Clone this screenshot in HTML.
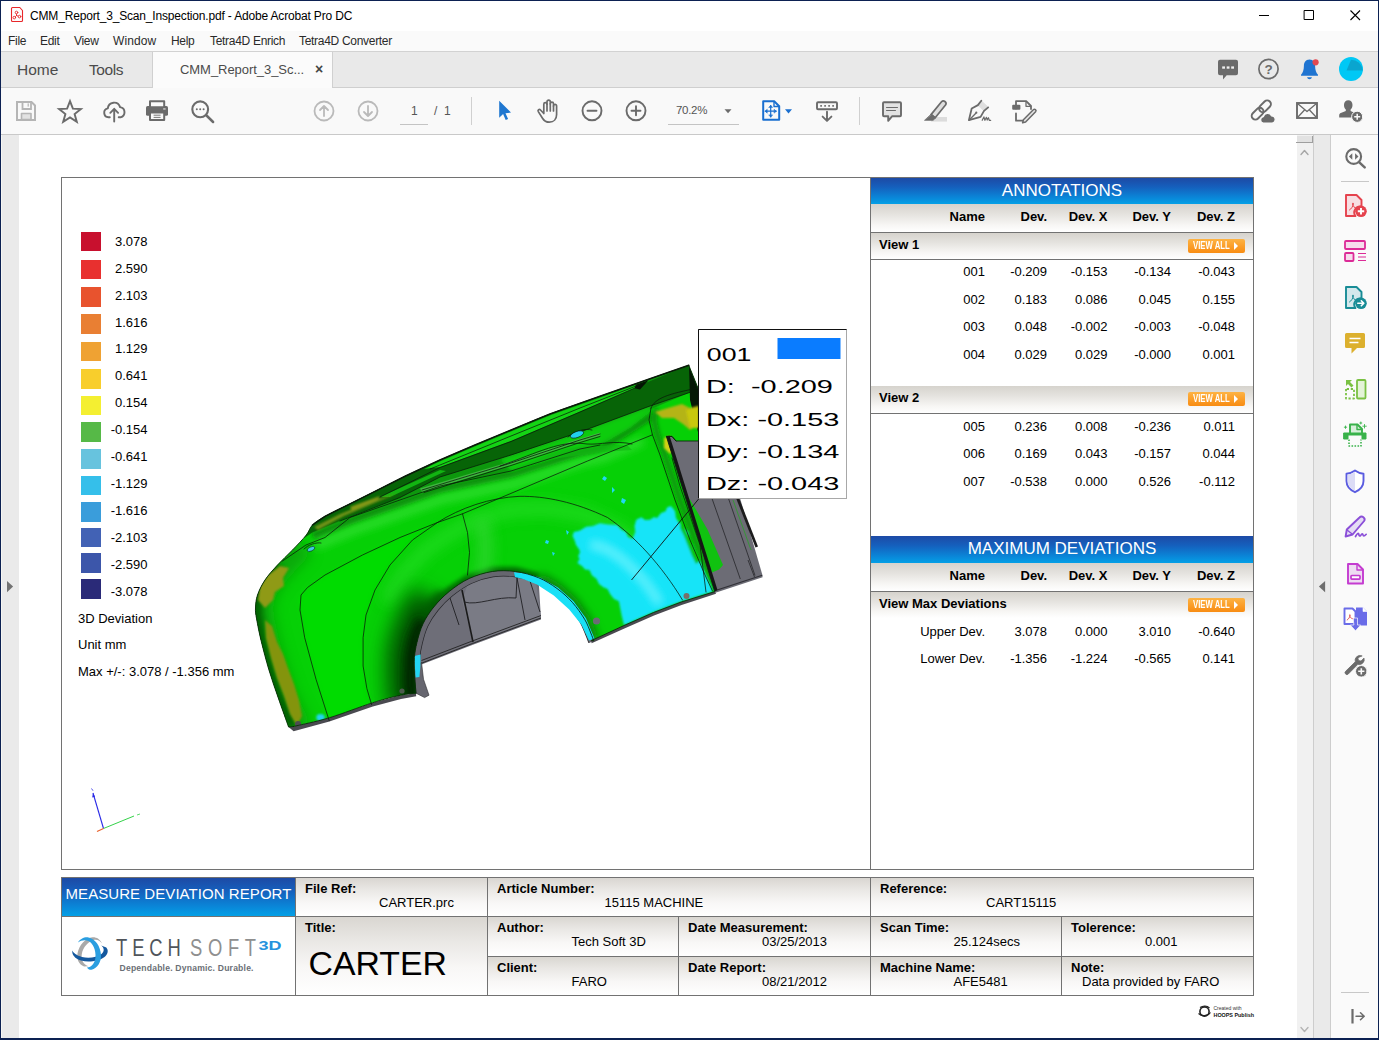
<!DOCTYPE html>
<html lang="en">
<head>
<meta charset="utf-8">
<title>CMM_Report_3_Scan_Inspection.pdf - Adobe Acrobat Pro DC</title>
<style>
*{box-sizing:border-box;margin:0;padding:0}
html,body{width:1379px;height:1040px;overflow:hidden;background:#fff}
body{font-family:"Liberation Sans",sans-serif;color:#000;position:relative}
.abs{position:absolute}
#win{position:absolute;left:0;top:0;width:1379px;height:1040px;background:#fff;overflow:hidden}
/* chrome */
#titlebar{left:1px;top:1px;width:1377px;height:30px;background:#fff}
#titletext{left:30px;top:9px;font-size:12px;color:#000;white-space:nowrap;letter-spacing:-0.17px}
#menubar{left:1px;top:31px;width:1377px;height:20px;background:#fafafa}
.menu{position:absolute;top:34px;font-size:12px;color:#2a2a2a;white-space:nowrap;letter-spacing:-0.3px}
#tabbar{left:1px;top:51px;width:1377px;height:37px;background:#e9e9e9;border-top:1px solid #d2d2d2;border-bottom:1px solid #cfcfcf}
#tabactive{left:152px;top:52px;width:181px;height:36px;background:#fbfbfb;border-left:1px solid #d0d0d0;border-right:1px solid #d0d0d0}
.tabtxt{position:absolute;white-space:nowrap;color:#4b4b4b}
#toolbar{left:1px;top:88px;width:1377px;height:47px;background:#f9f9f9;border-bottom:1px solid #c9c9c9}
/* content */
#leftpane{left:1px;top:135px;width:18px;height:903px;background:#eaeaea;border-left:1px solid #f6f6f3}
#page{left:19px;top:135px;width:1278px;height:903px;background:#fff}
#vscroll{left:1297px;top:135px;width:16px;height:903px;background:#f1f1f1}
#midpane{left:1313px;top:135px;width:18px;height:903px;background:#eaeaea;border-left:1px solid #cdcdcd;border-right:1px solid #cdcdcd}
#rightpane{left:1331px;top:135px;width:47px;height:903px;background:#fafafa}
.bord{background:#0c2152}
/* pdf page */
.t13{position:absolute;font-size:13px;line-height:15px;white-space:nowrap;color:#000}
.b{font-weight:bold}
.r{text-align:right}
.bluehdr{position:absolute;background:linear-gradient(#1d4aa5 0%,#1560bd 35%,#0a86d8 75%,#04a0e6 100%);color:#fff;text-align:center;white-space:nowrap}
.greyrow{position:absolute;background:linear-gradient(#d6d3cd 0%,#e4e2de 35%,#f7f6f4 75%,#ffffff 100%)}
.line{position:absolute;background:#727272}
.va{position:absolute;width:57px;height:14.4px;border-radius:2px;background:linear-gradient(#fdb344,#fb9f2a 50%,#f88c12);color:#fff;font-size:10px;font-weight:bold;line-height:14.4px;white-space:nowrap;overflow:hidden}
.va span{position:absolute;left:5px;top:0.2px;transform:scaleX(0.775);transform-origin:0 50%;letter-spacing:0}
.va i{position:absolute;left:46.3px;top:3.2px;width:0;height:0;border-left:4.6px solid #fff;border-top:4px solid transparent;border-bottom:4px solid transparent}
.sw{position:absolute;left:81px;width:20px;height:19px}
.cell{position:absolute;background:linear-gradient(#d9d6d1 0%,#e9e7e4 30%,#f8f7f6 65%,#ffffff 100%)}
</style>
</head>
<body>
<div id="win">
<!-- CHROME-START -->
<div id="titlebar" class="abs"></div>
<div id="titletext" class="abs">CMM_Report_3_Scan_Inspection.pdf - Adobe Acrobat Pro DC</div>
<div id="menubar" class="abs"></div>
<div class="menu" style="left:8px">File</div>
<div class="menu" style="left:40px">Edit</div>
<div class="menu" style="left:74px">View</div>
<div class="menu" style="left:113px;letter-spacing:0.1px">Window</div>
<div class="menu" style="left:171px">Help</div>
<div class="menu" style="left:210px">Tetra4D Enrich</div>
<div class="menu" style="left:299px">Tetra4D Converter</div>
<div id="tabbar" class="abs"></div>
<div id="tabactive" class="abs"></div>
<div class="tabtxt" style="left:17px;top:61px;font-size:15.5px">Home</div>
<div class="tabtxt" style="left:89px;top:61px;font-size:15.5px;letter-spacing:-0.4px">Tools</div>
<div class="tabtxt" style="left:180px;top:62px;font-size:13px;letter-spacing:-0.05px">CMM_Report_3_Sc...</div>
<div class="tabtxt" style="left:315px;top:61px;font-size:14px;font-weight:bold;color:#444">×</div>
<div id="toolbar" class="abs"></div>
<!-- CHROME-END -->
<!-- CONTENT-START -->
<div id="leftpane" class="abs"></div>
<div id="page" class="abs"></div>
<div id="vscroll" class="abs"></div>
<div id="midpane" class="abs"></div>
<div id="rightpane" class="abs"></div>
<!-- CONTENT-END -->
<!-- PDF-START -->
<div class="line" style="left:61px;top:177px;width:1193px;height:1px;background:#727272"></div>
<div class="line" style="left:61px;top:869px;width:1193px;height:1px;background:#727272"></div>
<div class="line" style="left:61px;top:177px;width:1px;height:693px;background:#727272"></div>
<div class="line" style="left:1253px;top:177px;width:1px;height:693px;background:#727272"></div>
<div class="line" style="left:870px;top:177px;width:1px;height:693px;background:#727272"></div>
<div class="sw" style="top:232px;height:19px;background:#c8102e"></div>
<div class="t13 r" style="left:100px;width:47.5px;top:233.8px">3.078</div>
<div class="sw" style="top:260px;height:19px;background:#e8302f"></div>
<div class="t13 r" style="left:100px;width:47.5px;top:260.7px">2.590</div>
<div class="sw" style="top:287px;height:20px;background:#e8532e"></div>
<div class="t13 r" style="left:100px;width:47.5px;top:287.6px">2.103</div>
<div class="sw" style="top:314px;height:20px;background:#e97f33"></div>
<div class="t13 r" style="left:100px;width:47.5px;top:314.5px">1.616</div>
<div class="sw" style="top:342px;height:19px;background:#efa233"></div>
<div class="t13 r" style="left:100px;width:47.5px;top:341.4px">1.129</div>
<div class="sw" style="top:369px;height:20px;background:#f8ce2c"></div>
<div class="t13 r" style="left:100px;width:47.5px;top:368.3px">0.641</div>
<div class="sw" style="top:396px;height:19px;background:#f4ef31"></div>
<div class="t13 r" style="left:100px;width:47.5px;top:395.2px">0.154</div>
<div class="sw" style="top:422px;height:20px;background:#56b947"></div>
<div class="t13 r" style="left:100px;width:47.5px;top:422.1px">-0.154</div>
<div class="sw" style="top:449px;height:20px;background:#67c3de"></div>
<div class="t13 r" style="left:100px;width:47.5px;top:449.0px">-0.641</div>
<div class="sw" style="top:476px;height:19px;background:#35bfea"></div>
<div class="t13 r" style="left:100px;width:47.5px;top:475.9px">-1.129</div>
<div class="sw" style="top:502px;height:20px;background:#3a9ddb"></div>
<div class="t13 r" style="left:100px;width:47.5px;top:502.8px">-1.616</div>
<div class="sw" style="top:528px;height:19px;background:#4262b5"></div>
<div class="t13 r" style="left:100px;width:47.5px;top:529.7px">-2.103</div>
<div class="sw" style="top:553px;height:20px;background:#3c56aa"></div>
<div class="t13 r" style="left:100px;width:47.5px;top:556.6px">-2.590</div>
<div class="sw" style="top:579px;height:20px;background:#2a2a78"></div>
<div class="t13 r" style="left:100px;width:47.5px;top:583.5px">-3.078</div>
<div class="t13" style="left:78px;top:611px">3D Deviation</div>
<div class="t13" style="left:78px;top:637px">Unit mm</div>
<div class="t13" style="left:78px;top:664px">Max +/-: 3.078 / -1.356 mm</div>
<div class="bluehdr" style="left:871px;top:178px;width:382px;height:26px;font-size:17px;line-height:25px">ANNOTATIONS</div>
<div class="greyrow" style="left:871px;top:204px;width:382px;height:28px"></div>
<div class="line" style="left:871px;top:232px;width:382px;height:1px;background:#727272"></div>
<div class="t13 b r" style="left:905px;width:80px;top:209px">Name</div>
<div class="t13 b r" style="left:967px;width:80px;top:209px">Dev.</div>
<div class="t13 b r" style="left:1027.5px;width:80px;top:209px">Dev. X</div>
<div class="t13 b r" style="left:1091px;width:80px;top:209px">Dev. Y</div>
<div class="t13 b r" style="left:1155px;width:80px;top:209px">Dev. Z</div>
<div class="greyrow" style="left:871px;top:233px;width:382px;height:26px"></div>
<div class="line" style="left:871px;top:259px;width:382px;height:1px;background:#727272"></div>
<div class="t13 b" style="left:879px;top:237px">View 1</div>
<div class="va" style="left:1188px;top:238.5px"><span>VIEW ALL</span><i></i></div>
<div class="t13 r" style="left:895px;width:90px;top:264px">001</div>
<div class="t13 r" style="left:957px;width:90px;top:264px">-0.209</div>
<div class="t13 r" style="left:1017.5px;width:90px;top:264px">-0.153</div>
<div class="t13 r" style="left:1081px;width:90px;top:264px">-0.134</div>
<div class="t13 r" style="left:1145px;width:90px;top:264px">-0.043</div>
<div class="t13 r" style="left:895px;width:90px;top:291.5px">002</div>
<div class="t13 r" style="left:957px;width:90px;top:291.5px">0.183</div>
<div class="t13 r" style="left:1017.5px;width:90px;top:291.5px">0.086</div>
<div class="t13 r" style="left:1081px;width:90px;top:291.5px">0.045</div>
<div class="t13 r" style="left:1145px;width:90px;top:291.5px">0.155</div>
<div class="t13 r" style="left:895px;width:90px;top:319px">003</div>
<div class="t13 r" style="left:957px;width:90px;top:319px">0.048</div>
<div class="t13 r" style="left:1017.5px;width:90px;top:319px">-0.002</div>
<div class="t13 r" style="left:1081px;width:90px;top:319px">-0.003</div>
<div class="t13 r" style="left:1145px;width:90px;top:319px">-0.048</div>
<div class="t13 r" style="left:895px;width:90px;top:346.7px">004</div>
<div class="t13 r" style="left:957px;width:90px;top:346.7px">0.029</div>
<div class="t13 r" style="left:1017.5px;width:90px;top:346.7px">0.029</div>
<div class="t13 r" style="left:1081px;width:90px;top:346.7px">-0.000</div>
<div class="t13 r" style="left:1145px;width:90px;top:346.7px">0.001</div>
<div class="greyrow" style="left:871px;top:386px;width:382px;height:27px"></div>
<div class="line" style="left:871px;top:413px;width:382px;height:1px;background:#727272"></div>
<div class="t13 b" style="left:879px;top:390px">View 2</div>
<div class="va" style="left:1188px;top:391.5px"><span>VIEW ALL</span><i></i></div>
<div class="t13 r" style="left:895px;width:90px;top:419px">005</div>
<div class="t13 r" style="left:957px;width:90px;top:419px">0.236</div>
<div class="t13 r" style="left:1017.5px;width:90px;top:419px">0.008</div>
<div class="t13 r" style="left:1081px;width:90px;top:419px">-0.236</div>
<div class="t13 r" style="left:1145px;width:90px;top:419px">0.011</div>
<div class="t13 r" style="left:895px;width:90px;top:446px">006</div>
<div class="t13 r" style="left:957px;width:90px;top:446px">0.169</div>
<div class="t13 r" style="left:1017.5px;width:90px;top:446px">0.043</div>
<div class="t13 r" style="left:1081px;width:90px;top:446px">-0.157</div>
<div class="t13 r" style="left:1145px;width:90px;top:446px">0.044</div>
<div class="t13 r" style="left:895px;width:90px;top:474px">007</div>
<div class="t13 r" style="left:957px;width:90px;top:474px">-0.538</div>
<div class="t13 r" style="left:1017.5px;width:90px;top:474px">0.000</div>
<div class="t13 r" style="left:1081px;width:90px;top:474px">0.526</div>
<div class="t13 r" style="left:1145px;width:90px;top:474px">-0.112</div>
<div class="bluehdr" style="left:871px;top:536px;width:382px;height:27px;font-size:17px;line-height:26px">MAXIMUM DEVIATIONS</div>
<div class="greyrow" style="left:871px;top:563px;width:382px;height:28px"></div>
<div class="line" style="left:871px;top:591px;width:382px;height:1px;background:#727272"></div>
<div class="t13 b r" style="left:905px;width:80px;top:568px">Name</div>
<div class="t13 b r" style="left:967px;width:80px;top:568px">Dev.</div>
<div class="t13 b r" style="left:1027.5px;width:80px;top:568px">Dev. X</div>
<div class="t13 b r" style="left:1091px;width:80px;top:568px">Dev. Y</div>
<div class="t13 b r" style="left:1155px;width:80px;top:568px">Dev. Z</div>
<div class="greyrow" style="left:871px;top:592px;width:382px;height:26px"></div>
<div class="t13 b" style="left:879px;top:596px">View Max Deviations</div>
<div class="va" style="left:1188px;top:597.5px"><span>VIEW ALL</span><i></i></div>
<div class="t13 r" style="left:895px;width:90px;top:624px">Upper Dev.</div>
<div class="t13 r" style="left:957px;width:90px;top:624px">3.078</div>
<div class="t13 r" style="left:1017.5px;width:90px;top:624px">0.000</div>
<div class="t13 r" style="left:1081px;width:90px;top:624px">3.010</div>
<div class="t13 r" style="left:1145px;width:90px;top:624px">-0.640</div>
<div class="t13 r" style="left:895px;width:90px;top:651px">Lower Dev.</div>
<div class="t13 r" style="left:957px;width:90px;top:651px">-1.356</div>
<div class="t13 r" style="left:1017.5px;width:90px;top:651px">-1.224</div>
<div class="t13 r" style="left:1081px;width:90px;top:651px">-0.565</div>
<div class="t13 r" style="left:1145px;width:90px;top:651px">0.141</div>
<div class="bluehdr" style="left:62px;top:878px;width:233px;height:38px;font-size:15px;line-height:32px;letter-spacing:0.06px">MEASURE DEVIATION REPORT</div>
<div class="cell" style="left:296px;top:878px;width:191px;height:38px"></div>
<div class="t13 b" style="left:305px;top:881px">File Ref:</div>
<div class="t13" style="left:379px;top:895px">CARTER.prc</div>
<div class="cell" style="left:488px;top:878px;width:382px;height:38px"></div>
<div class="t13 b" style="left:497px;top:881px">Article Number:</div>
<div class="t13" style="left:604.5px;top:895px">15115 MACHINE</div>
<div class="cell" style="left:871px;top:878px;width:382px;height:38px"></div>
<div class="t13 b" style="left:880px;top:881px">Reference:</div>
<div class="t13" style="left:986px;top:895px">CART15115</div>
<div class="cell" style="left:296px;top:917px;width:191px;height:78px"></div>
<div class="t13 b" style="left:305px;top:920px">Title:</div>
<div class="abs" style="left:308.5px;top:944.8px;font-size:33.8px;line-height:36px;white-space:nowrap">CARTER</div>
<div class="cell" style="left:488px;top:917px;width:190px;height:39px"></div>
<div class="t13 b" style="left:497px;top:920px">Author:</div>
<div class="t13" style="left:571.5px;top:934px">Tech Soft 3D</div>
<div class="cell" style="left:679px;top:917px;width:191px;height:39px"></div>
<div class="t13 b" style="left:688px;top:920px">Date Measurement:</div>
<div class="t13" style="left:762px;top:934px">03/25/2013</div>
<div class="cell" style="left:871px;top:917px;width:190px;height:39px"></div>
<div class="t13 b" style="left:880px;top:920px">Scan Time:</div>
<div class="t13" style="left:953.5px;top:934px">25.124secs</div>
<div class="cell" style="left:1062px;top:917px;width:191px;height:39px"></div>
<div class="t13 b" style="left:1071px;top:920px">Tolerence:</div>
<div class="t13" style="left:1145px;top:934px">0.001</div>
<div class="cell" style="left:488px;top:957px;width:190px;height:38px"></div>
<div class="t13 b" style="left:497px;top:960px">Client:</div>
<div class="t13" style="left:571.5px;top:974px">FARO</div>
<div class="cell" style="left:679px;top:957px;width:191px;height:38px"></div>
<div class="t13 b" style="left:688px;top:960px">Date Report:</div>
<div class="t13" style="left:762px;top:974px">08/21/2012</div>
<div class="cell" style="left:871px;top:957px;width:190px;height:38px"></div>
<div class="t13 b" style="left:880px;top:960px">Machine Name:</div>
<div class="t13" style="left:953.5px;top:974px">AFE5481</div>
<div class="cell" style="left:1062px;top:957px;width:191px;height:38px"></div>
<div class="t13 b" style="left:1071px;top:960px">Note:</div>
<div class="t13" style="left:1082px;top:974px">Data provided by FARO</div>
<div class="line" style="left:61px;top:877px;width:1193px;height:1px;background:#727272"></div>
<div class="line" style="left:61px;top:995px;width:1193px;height:1px;background:#727272"></div>
<div class="line" style="left:61px;top:877px;width:1px;height:119px;background:#727272"></div>
<div class="line" style="left:1253px;top:877px;width:1px;height:119px;background:#727272"></div>
<div class="line" style="left:61px;top:916px;width:1193px;height:1px;background:#727272"></div>
<div class="line" style="left:487px;top:956px;width:767px;height:1px;background:#727272"></div>
<div class="line" style="left:295px;top:877px;width:1px;height:119px;background:#727272"></div>
<div class="line" style="left:487px;top:877px;width:1px;height:119px;background:#727272"></div>
<div class="line" style="left:870px;top:877px;width:1px;height:119px;background:#727272"></div>
<div class="line" style="left:678px;top:916px;width:1px;height:80px;background:#727272"></div>
<div class="line" style="left:1061px;top:916px;width:1px;height:80px;background:#727272"></div>
<svg class="abs" style="left:62px;top:917px" width="233" height="78" viewBox="62 917 233 78">
<g stroke="none">
<path d="M102 943.5C100 939 96.5 937 92.5 937.200C85.5 938 79 945 77.5 953.500C76.5 959.5 79 964.5 84 966.500L88.5 966.300C83.5 964.5 80.8 960 81.8 954C83 947.5 88 941.5 93.5 940C97 939.2 100 940.5 102 943.500Z" fill="#a9a9a9"/>
<path d="M72.4 950.500C71.5 954.5 75 958.8 81 960.600C89 962.8 99 961 104.5 957C108 954.3 108.8 950.5 106.3 947.500L101.2 945.500C104.5 948 104.5 951.5 101.5 954C97 957.5 88.5 958.7 82 957C76.5 955.5 73 952.5 72.4 950.500Z" fill="#14589e"/>
<path d="M78 942.600C80 939 84.5 936.8 88.5 937.500C95 938.7 100.5 946 101 955C101.3 962 97.5 968.3 91.5 969.800C89.5 970 88 969 87 967.500C91.5 967.5 95 963 95.5 957C96 950 93 943.5 88.5 941C85 939.5 81 940.3 78 942.600Z" fill="#2a9ee0"/>
</g>
<g transform="translate(116 956) scale(0.8 1)"><text x="0" y="0" font-family="Liberation Sans, sans-serif" font-size="23" fill="#50555b" textLength="81" lengthAdjust="spacing">TECH</text></g>
<g transform="translate(190 956) scale(0.8 1)"><text x="0" y="0" font-family="Liberation Sans, sans-serif" font-size="23" fill="#8f8f8f" textLength="82.5" lengthAdjust="spacing">SOFT</text></g>
<text x="258.5" y="949.5" font-family="Liberation Sans, sans-serif" font-size="13" font-weight="bold" fill="#2492dd" textLength="23" lengthAdjust="spacingAndGlyphs">3D</text>
<text x="119.5" y="970.5" font-family="Liberation Sans, sans-serif" font-size="8.6" font-weight="bold" fill="#6a6f76" textLength="134" lengthAdjust="spacing">Dependable. Dynamic. Durable.</text>
</svg>
<svg class="abs" style="left:1196px;top:1003px" width="60" height="18" viewBox="1196 1003 60 18">
<circle cx="1204.5" cy="1011.5" r="4.6" fill="none" stroke="#222" stroke-width="1.6"/>
<path d="M1198.5 1013.5c3 3 9 3 12-1M1200 1007.5c3-2 7-2 9.5.5" fill="none" stroke="#222" stroke-width="1.1"/>
<text x="1213.5" y="1010" font-family="Liberation Sans, sans-serif" font-size="5" fill="#333">Created with</text>
<text x="1213.5" y="1016.5" font-family="Liberation Sans, sans-serif" font-size="5.4" font-weight="bold" fill="#111">HOOPS Publish</text>
</svg>
<!-- PDF-END -->
<!-- MODEL-START -->
<svg class="abs" style="left:62px;top:178px" width="808" height="690" viewBox="62 178 808 690">
<defs>
<filter id="bl2" filterUnits="userSpaceOnUse" x="240" y="330" width="560" height="420"><feGaussianBlur stdDeviation="2"/></filter>
<filter id="bl4" filterUnits="userSpaceOnUse" x="240" y="330" width="560" height="420"><feGaussianBlur stdDeviation="4"/></filter>
<filter id="bl7" filterUnits="userSpaceOnUse" x="240" y="330" width="560" height="420"><feGaussianBlur stdDeviation="7"/></filter>
<filter id="bl10" filterUnits="userSpaceOnUse" x="240" y="330" width="560" height="420"><feGaussianBlur stdDeviation="10"/></filter>
<filter id="bl1" filterUnits="userSpaceOnUse" x="240" y="330" width="560" height="420"><feGaussianBlur stdDeviation="0.8"/></filter>
<path id="bodyp" d="M293.4 726.5L288.6 727.0C286.9 722.2 281.6 707.5 278.3 698.0C275.0 688.5 271.7 679.2 268.9 669.8C266.1 660.4 263.4 650.0 261.3 641.5C259.2 633.0 257.6 624.5 256.6 618.9C255.6 613.3 255.3 612.0 255.5 608.0C255.7 604.0 255.9 599.7 257.5 595.0C259.1 590.3 261.7 585.0 265.0 580.0C268.3 575.0 272.9 570.0 277.5 565.0C282.1 560.0 287.7 555.0 292.5 550.0C297.3 545.0 303.0 539.2 306.3 535.0C309.6 530.8 309.4 528.1 312.5 525.0C315.6 521.9 318.8 519.8 325.0 516.3C331.2 512.8 341.7 508.0 350.0 503.8C358.3 499.6 365.8 495.9 375.0 491.3C384.2 486.7 394.2 481.5 405.0 476.3C415.8 471.1 428.3 465.2 440.0 460.0C451.7 454.8 463.3 449.9 475.0 445.0C486.7 440.1 497.5 435.7 510.0 430.5C522.5 425.3 535.0 419.7 550.0 414.0C565.0 408.3 583.3 402.2 600.0 396.3C616.7 390.4 635.2 384.0 650.0 378.8C664.8 373.6 682.3 367.6 688.8 365.3L700.0 393.0L700.0 441.0L676.0 441.0L672.0 436.4L666.4 436.4L680.0 480.0L698.0 537.0L714.8 591.6L681.2 602.0L653.5 612.5L624.0 625.5L591.5 640.5L593.8 640.8C593.3 639.5 592.3 636.6 590.8 633.0C589.3 629.4 587.7 624.3 584.6 619.2C581.5 614.1 576.9 607.4 572.3 602.3C567.7 597.2 562.6 592.6 557.0 588.5C551.4 584.4 545.4 580.5 538.5 577.7C531.6 574.9 523.1 572.5 515.4 571.5C507.7 570.5 500.0 570.3 492.3 571.5C484.6 572.7 476.4 575.2 469.2 578.5C462.0 581.8 455.1 586.8 449.2 591.5C443.3 596.2 438.2 601.6 433.8 607.0C429.4 612.4 425.8 617.9 423.0 623.8C420.2 629.7 418.4 636.6 417.0 642.3C415.6 647.9 414.8 652.6 414.4 657.7C414.0 662.8 414.1 667.1 414.4 673.0C414.7 678.9 415.7 689.8 416.0 693.2C413.5 693.5 408.1 693.6 400.8 695.2C393.6 696.8 384.4 699.0 372.5 702.8C360.6 706.6 342.4 713.8 329.2 717.8C316.0 721.8 299.4 725.0 293.4 726.5Z"/>
<clipPath id="bodyc"><use href="#bodyp"/></clipPath>
<linearGradient id="gpan" x1="0" y1="0" x2="1" y2="0"><stop offset="0" stop-color="#5f5f68"/><stop offset="1" stop-color="#72727b"/></linearGradient>
</defs>
<!-- rear grey panel -->
<path d="M664 434L700 434L740 498L762.4 575L762.6 577.3L715.5 592.8L690 560Z" fill="#6c6c75"/>
<path d="M736 498L739 498L758 546.5L755.5 547.5Z" fill="#1c1c1c"/>
<path d="M712 498.5L740.3 579M728.5 498.5L755 575.5M748 560l6.5 17" stroke="#26262a" stroke-width="0.8" fill="none"/>
<path d="M733 500l18 50" stroke="#2aa02a" stroke-width="1" fill="none" opacity="0.8"/>
<path d="M714.8 590.7L762.2 575.2" stroke="#303036" stroke-width="1.2" fill="none"/>
<path d="M689 498L695 508L707.5 529.5L723 565L719 569.5L712 572.5L703 552L694 524Z" fill="#10c210"/>
<!-- interior under arch -->
<path d="M414.4 660L417 642.3L423 623.8L433.8 607L449.2 591.5L469.2 578.5L492.3 571.5L515.4 571.5L538.5 577.7L541 619.5L472.3 645L421.5 664.5Z" fill="#6e6e78"/>
<path d="M470 578L492 575L517 576L536 582L541 617L473 642L462 600Z" fill="#7a7b85"/>
<path d="M462 590L473 642" stroke="#1a1a1a" stroke-width="1.6" fill="none"/>
<path d="M450 598L459 625M517 578L525 620M530 581L540 612M464 602C478 606 496 596 516 598L517 578" stroke="#1f1f22" stroke-width="0.9" fill="none"/>
<path d="M421.5 660.5L472.3 641L541 615.5M422 663L472.5 643.5L541 618" stroke="#222" stroke-width="0.9" fill="none"/>
<!-- arch lip (grey band) -->
<path d="M593.8 640.8C593.3 639.5 592.3 636.6 590.8 633.0C589.3 629.4 587.7 624.3 584.6 619.2C581.5 614.1 576.9 607.4 572.3 602.3C567.7 597.2 562.6 592.6 557.0 588.5C551.4 584.4 545.4 580.5 538.5 577.7C531.6 574.9 523.1 572.5 515.4 571.5C507.7 570.5 500.0 570.3 492.3 571.5C484.6 572.7 476.4 575.2 469.2 578.5C462.0 581.8 455.1 586.8 449.2 591.5C443.3 596.2 438.2 601.6 433.8 607.0C429.4 612.4 425.8 617.9 423.0 623.8C420.2 629.7 418.4 636.6 417.0 642.3C415.6 647.9 414.8 652.6 414.4 657.7C414.0 662.8 414.1 667.1 414.4 673.0C414.7 678.9 415.7 689.8 416.0 693.2" stroke="#26262a" stroke-width="11.6" fill="none"/>
<path d="M593.8 640.8C593.3 639.5 592.3 636.6 590.8 633.0C589.3 629.4 587.7 624.3 584.6 619.2C581.5 614.1 576.9 607.4 572.3 602.3C567.7 597.2 562.6 592.6 557.0 588.5C551.4 584.4 545.4 580.5 538.5 577.7C531.6 574.9 523.1 572.5 515.4 571.5C507.7 570.5 500.0 570.3 492.3 571.5C484.6 572.7 476.4 575.2 469.2 578.5C462.0 581.8 455.1 586.8 449.2 591.5C443.3 596.2 438.2 601.6 433.8 607.0C429.4 612.4 425.8 617.9 423.0 623.8C420.2 629.7 418.4 636.6 417.0 642.3C415.6 647.9 414.8 652.6 414.4 657.7C414.0 662.8 414.1 667.1 414.4 673.0C414.7 678.9 415.7 689.8 416.0 693.2" stroke="#66666f" stroke-width="10.2" fill="none"/>
<path d="M414.4 673L416 693.2L424.6 697.6L429 695.2L423.5 679.2L421.5 662.3Z" fill="#66666f" stroke="#2a2a2e" stroke-width="0.6"/>
<!-- bottom lips -->
<path d="M288.6 727L293.6 731.3L329.4 721.6L372.8 706.6L401 699L416.2 696.2L416 693.2L400.8 695.2L372.5 702.8L329.2 717.8L293.4 726.5Z" fill="#4a4a50"/>
<path d="M591.6 643.2L624.4 628.6L654 615.6L681.6 604.9L716 593.8L714.8 590.5L681.2 601.5L653.5 612L624 625L591 640Z" fill="#4a4a50"/>
<!-- BODY -->
<use href="#bodyp" fill="#06d006"/>
<g clip-path="url(#bodyc)">
<!-- general shading -->
<!-- shoulder (D2..B): darker below D2 then highlight -->
<path d="M312 533L350 517.5L400 500L440 486L511 471L580 449L600 445L651 412" stroke="#0a8e0a" stroke-width="8" fill="none" filter="url(#bl2)" transform="translate(1 3)"/>
<path d="M312 533L350 517.5L400 500L440 486L511 471L580 449L600 445L640 428" stroke="#35e035" stroke-width="7" fill="none" filter="url(#bl4)" transform="translate(3 13)"/>
<!-- top band medium (T..D2) -->
<path d="M304 538L312 533L350 517.5L400 500L440 486L511 471L580 449L600 445L651 409L691 392L700 393L700 350L500 420L300 520Z" fill="#0d980d"/>
<path d="M500 459L520 452.5L580 432L650 406L652 410L630 428L600 445L580 449L540 463L511 471Z" fill="#10cc10" filter="url(#bl2)"/>
<!-- dark strip (R..D1) + rear top face -->
<path d="M304 538L312.5 525L325 516.3L350 503.8L375 491.3L405 476.3L428 465.5L440 467L511 441L580 411.5L634.9 388L647.3 382.2L688.8 365.3L700 393L691 392L650 406L580 432L511 455L440 477L400 497.5L350 516.5L312 532.5Z" fill="#076407"/>
<!-- pale strip in medium band -->
<path d="M420 488.5L511 461.5L580 438.5L600 432.5L600 436L580 442L511 465L422 492Z" fill="#45b845" opacity="0.9"/>
<path d="M520 466C545 457 560 447 585 447C600 447 612 443 628 446L632 450L600 452L560 458Z" fill="#12b812" opacity="0.7"/>
<!-- rails (T..R) bright -->
<path d="M424 469L440 461.5L475 446.5L510 432L550 415.5L600 397.8L636 385L634.9 388L580 411.5L511 441L440 467Z" fill="#14d414"/>
<path d="M380 497L440 470L446 471L390 497Z" fill="#12b412"/>
<path d="M636 384.8L648.5 380.3L640 389.5L634.5 388.2Z" fill="#041404"/>
<!-- bright middle -->
<path d="M301 595L325 575L362 555L400 537.5L437 522.5L412 540L390 565L375 590L366 615L362.5 640L363 666L367 688.6L371.6 704.6L329 720.7L316 679L304.7 637.7L299 600Z" fill="#00dc00" filter="url(#bl2)"/>
<!-- left side medium -->
<path d="M296 732L280 700L270 670L262 641L257 618L256 606L259 592L268 576L282 560L300 542" stroke="#0a9c0a" stroke-width="34" fill="none" filter="url(#bl7)" opacity="0.75"/>
<!-- left edge dark -->
<path d="M293 729L278.3 698L268.9 669.8L261.3 641.5L256.6 618.9L255.5 608L257.5 595L265 580L277.5 565" stroke="#055205" stroke-width="11" fill="none" filter="url(#bl4)"/>
<!-- arch groove dark + flare highlight -->
<path d="M416 693L414.4 673L414.4 657.7L417 642.3L423 623.8L433.8 607L445 595" stroke="#056005" stroke-width="16" fill="none" filter="url(#bl4)"/>
<path d="M440 600L449.2 591.5L469.2 578.5L492.3 571.5L515.4 571.5L538.5 577.7" stroke="#067006" stroke-width="9" fill="none" filter="url(#bl2)"/>
<path d="M538.5 577.7L557 588.5L572.3 602.3L584.6 619.2L593.8 640.8" stroke="#078007" stroke-width="12" fill="none" filter="url(#bl4)"/>
<path d="M375 590L390 565L412.5 540L437.5 522.5L462 509L500 497.5L537.5 496.3L575 502.5L607.5 517.5L637.5 540L660 565L675 587.5L682.5 600" stroke="#33e233" stroke-width="13" fill="none" filter="url(#bl7)" transform="translate(11 12)" opacity="0.6"/>
<path d="M469 520C476 545 474 565 468 580" stroke="#3ad83a" stroke-width="14" fill="none" filter="url(#bl7)" opacity="0.7" transform="translate(12 0)"/>
<path d="M408 712L404 685L404 655L409 634L418 614L430 598" stroke="#045604" stroke-width="36" fill="none" filter="url(#bl10)"/>
<path d="M412 708L410 680L411 656L415 638L423 620" stroke="#022802" stroke-width="14" fill="none" filter="url(#bl4)"/>
<!-- rear flange dark -->
<path d="M651 408L649 420L652.5 435L660 455L675 500L690 540L705 575L713 591" stroke="#0a8f0a" stroke-width="5" fill="none" filter="url(#bl2)" transform="translate(5 0)"/>
<path d="M689 366L699 392L700 440L690 400Z" fill="#061806"/>
<!-- olive patches -->
<g filter="url(#bl1)">
<path d="M289 568L283 578L284 586L275 592L273 600L265 608L258 600L260 586L268 575L280 566Z" fill="#8f9a14"/>
<path d="M265 620L272 626L277 642L283 654L288 668L294 684L299 700L302 716L297 726L290 714L284 696L277 678L271 658L266 638Z" fill="#84940f"/>
<path d="M314 527L340 514L372 501L398 493L372 504L344 516L318 530Z" fill="#6f9214"/><path d="M350 507L380 496L378 499L352 510Z" fill="#8a9a18"/>
<path d="M655 412L668 408L682 404L690 408L698 406L699 424L690 430L683 424L674 418L662 418Z" fill="#b4b414"/>
<path d="M686 410L699 406L699 428L690 428Z" fill="#c8c810"/>
<path d="M664 438L670 436L676 448L670 454L664 448Z" fill="#d4d018"/>
</g>
<!-- cyan blob -->
<g filter="url(#bl1)">
<path d="M573.8 532.0L580.0 530.5L586.0 526.7L593.0 526.0L599.8 523.3L608.0 524.5L617.1 525.0L621.0 529.5L625.8 532.0L628.0 537.0L632.7 538.9L634.0 535.0L635.3 532.0L634.5 526.0L636.2 519.8L641.4 517.2L645.0 520.0L650.0 519.8L654.0 517.0L657.0 518.0L661.0 513.0L665.6 511.2L667.0 507.5L670.8 506.0L673.5 509.0L675.1 511.2L676.0 518.0L679.4 523.3L684.6 528.5L688.1 532.0L690.0 540.0L693.3 545.8L696.7 554.4L703.7 570.0L710.6 585.6L712.7 591.7L681.2 601.4L653.5 612.2L624.0 625.3L621.5 615.0L618.9 601.2L614.0 599.0L610.2 594.2L607.5 589.0L603.3 587.3L599.0 584.0L596.4 578.7L592.0 575.5L589.4 570.0L585.0 569.5L582.5 566.6L577.3 563.1L579.5 559.0L578.2 556.2L580.0 552.0L579.0 549.2L576.0 545.0L574.7 540.6L572.5 536.0Z" fill="#14e4f8"/>
<path d="M590 545C610 545 640 570 660 604" stroke="#7af4ff" stroke-width="10" fill="none" filter="url(#bl4)" opacity="0.7"/>
<path d="M700 498L704 505L700 509L696 503Z" fill="#35c8f0"/>
<path d="M680 522L685 529L690 538L695 550L700 561L696 564L692 556L688 546L684 536L680 528Z" fill="#0cc40c"/>
</g>
<path d="M604 476l3 2-2 3-3-2zM612 487l3 3-3 3zM622 498l4 2-2 4-3-2zM566 530l3 2-2 3zM546 540l3 1-1 3-3-1zM552 552l3 1-2 3z" fill="#20d8f4"/>
<!-- grey dots -->
<circle cx="596.5" cy="621" r="3.6" fill="#6b6b73"/><circle cx="686.5" cy="596" r="3" fill="#77706a"/>
<circle cx="402" cy="691" r="2.6" fill="#4d5a4d"/><circle cx="298" cy="724" r="3" fill="#4d4d52"/>
<ellipse cx="320.5" cy="717.5" rx="4.2" ry="3.4" fill="#22d4f2" filter="url(#bl1)"/>
</g>
<!-- arch cyan strips -->
<path d="M540 577.5L558 587.5L573.5 601.3L586 618.2L594.5 638.5L589 640.5L581.5 624.8L569.2 609.5L553.8 595.6L537 584.5L523 579L515 577L514 572.3L526 573.5Z" fill="#18e0f6"/>
<path d="M414.3 656L420.6 654.5L420.4 666L419.4 677L415.6 677.5Z" fill="#22d6f4"/>
<!-- contour lines -->
<g stroke="#0a1a0a" stroke-width="0.750" fill="none" stroke-linecap="round">
<use href="#bodyp" stroke="#0a2a0a" stroke-width="0.9"/>
<path d="M312.5 525L325 516.3L350 503.8L375 491.3L405 476.3L440 460L475 445L510 430.5L550 414L600 396.3L650 378.8L688.8 365.3" stroke-width="1.5"/>
<path d="M282.5 561L306 545L325 537.5L350 517.5L400 500L440 486L511 471L580 449L600 445"/>
<path d="M329.2 720.7L316 679.2L304.7 637.7L300 610L301 595L307.5 587.5L325 575L362.5 555L400 537.5L437.5 522.5L462.5 513.8L510 493.8L587.5 461L652 435"/>
<path d="M371.6 704.6L366.9 688.6L363.1 666L363.1 637.7L366 615L375 590L390 565L412.5 540L437.5 522.5"/>
<path d="M462.5 513.8L467.5 532.5L469.5 552.5L467.5 575"/>
<path d="M437.5 522.5C460 508 490 497.5 520 496.3C545 496 575 502 607.5 517.5C635 536 662 566 682.5 600"/>
<path d="M651 408L649 420L652.5 435L660 455L675 500L690 540L705 575L712.5 591"/>
<path d="M651 408C655 398 668 394 698 388"/>
<path d="M672 458L680 486L700 545L706 592"/>
<path d="M430 469L440 465L511 436L580 408L640 384.5M380 497L440 467.5L511 441.5L580 412L634.9 388M340 521L400 497.5L440 477L511 455L580 432L650 406L691 392M422 490L511 463L580 440L600 434M424 492.5L511 465.5L580 442.5L600 436.5"/>
<path d="M500 466C540 452 560 440 587 444C600 445 615 440 632 444"/>
<path d="M568 437C575 431 585 428 592 430"/>
<path d="M676 441L672 436.4L666.4 436.4"/>
<path d="M304 549C308 545 316 542 321 543"/>
</g>
<ellipse cx="577" cy="434.5" rx="7" ry="3" transform="rotate(-20 577 434.5)" fill="#22d0ee" stroke="#0a1a0a" stroke-width="0.6"/>
<ellipse cx="311" cy="549" rx="4" ry="2" transform="rotate(-25 311 549)" fill="#40c8e8" stroke="#0a1a0a" stroke-width="0.5"/>
<!-- rear dark edge -->
<path d="M666.4 436.4L669.5 435.5L717.5 590L714.8 591.6Z" fill="#151515"/>
<!-- leader -->
<path d="M698.8 498.8L631.5 580" stroke="#101010" stroke-width="0.9" fill="none"/>
<!-- callout -->
<rect x="698.5" y="329.5" width="148" height="169" fill="#fff" stroke="#a8a8a8" stroke-width="1"/>
<path d="M698.5 498.5V329.5H846.5" stroke="#111" stroke-width="1" fill="none"/>
<rect x="777.5" y="338" width="63" height="21" fill="#0a7cff"/>
<g font-family="Liberation Sans, sans-serif" font-size="18.3" fill="#000" xml:space="preserve">
<text transform="translate(706.8 361) scale(1.46 1)">001</text>
<text transform="translate(706 393.3) scale(1.58 1)">D:&#160;&#160;-0.209</text>
<text transform="translate(706 425.5) scale(1.58 1)">Dx: -0.153</text>
<text transform="translate(706 457.5) scale(1.58 1)">Dy: -0.134</text>
<text transform="translate(706 489.8) scale(1.58 1)">Dz: -0.043</text>
</g>
<!-- axis triad -->
<path d="M103.5 828.5L93 793" stroke="#2a2ae6" stroke-width="1.1" fill="none"/>
<path d="M93 793l-.8 4.5 2.8-.8z" fill="#2a2ae6"/>
<path d="M91.5 788.5l1.5 2.2" stroke="#2a2ae6" stroke-width="0.8"/>
<path d="M103.5 828.5L134 816" stroke="#35d24a" stroke-width="1" fill="none"/>
<path d="M137 815l3-1" stroke="#35d24a" stroke-width="0.8"/>
<path d="M103.5 828.5L97 831.5" stroke="#e8602a" stroke-width="1.1" fill="none"/>
</svg>

<!-- MODEL-END -->
<!-- ICONS-START -->
<svg class="abs" style="left:0;top:0" width="1379" height="135" viewBox="0 0 1379 135" fill="none" stroke-linecap="round" stroke-linejoin="round">
<!-- title icon -->
<path d="M12.5 7.5h7.3l2.7 3v10a1 1 0 0 1-1 1h-9a1 1 0 0 1-1-1v-12a1 1 0 0 1 1-1z" fill="#fdfdfd" stroke="#e8272a" stroke-width="1.1"/>
<g stroke="#e8272a" stroke-width="0.9" fill="#fff">
<path d="M16.5 15.5L16.5 13.5M16.5 15.5L14.8 17.2M16.5 15.5L19 16.5"/>
<circle cx="16.5" cy="12.5" r="1.3"/><circle cx="14.3" cy="17.6" r="1.3"/><circle cx="19.5" cy="16.6" r="1.3"/>
</g>
<!-- window controls -->
<path d="M1259 15.5h10" stroke="#000" stroke-width="1" stroke-linecap="butt"/>
<rect x="1304.5" y="10.5" width="9" height="9" stroke="#000" stroke-width="1"/>
<path d="M1350.5 10.5l9.5 9.5M1360 10.5l-9.5 9.5" stroke="#000" stroke-width="1.1" stroke-linecap="butt"/>
<!-- tabbar right icons -->
<path d="M1220 59.8h16a2 2 0 0 1 2 2v11.4a2 2 0 0 1-2 2h-9.3l-3.7 4.3v-4.3h-3a2 2 0 0 1-2-2v-11.4a2 2 0 0 1 2-2z" fill="#6b6b6b"/>
<g fill="#f0f0f0"><rect x="1222.2" y="66.4" width="2.8" height="2.3"/><rect x="1226.7" y="66.4" width="2.8" height="2.3"/><rect x="1231.2" y="66.4" width="2.8" height="2.3"/></g>
<circle cx="1268.5" cy="69" r="9.6" stroke="#6b6b6b" stroke-width="1.7"/>
<text x="1268.5" y="73.8" font-family="Liberation Sans, sans-serif" font-size="13.5" font-weight="bold" fill="#6b6b6b" text-anchor="middle" stroke="none">?</text>
<path d="M1309.5 59.5c-4 0-5.6 3-5.6 6.5 0 4-1.2 6.8-2.9 8.8v1h17v-1c-1.7-2-2.9-4.8-2.9-8.8 0-3.5-1.6-6.5-5.6-6.5z" fill="#1f74d1"/>
<path d="M1307 77.3a2.6 2.6 0 0 0 5 0z" fill="#1f74d1"/>
<circle cx="1315.6" cy="62.3" r="3.1" fill="#e34850"/>
<circle cx="1351" cy="69" r="12" fill="#00c8f5"/>
<path d="M1346.5 70.5l4.5-10.8a12 12 0 0 1 11.9 10.8z" fill="#0aa5cf"/>
<!-- toolbar: save (disabled) -->
<path d="M17 102h14.5l3.5 3.5v14.5h-18z" stroke="#b5b5b5" stroke-width="2" stroke-linejoin="miter"/>
<path d="M22.5 102v7h8.5v-7" stroke="#b5b5b5" stroke-width="1.8" stroke-linejoin="miter"/>
<rect x="27.6" y="103.4" width="1.2" height="3.2" fill="#b5b5b5"/>
<rect x="21.5" y="113.5" width="9.5" height="6" fill="#e2e2e2" stroke="#b5b5b5" stroke-width="1.6"/>
<!-- star -->
<path d="M70 101.2l2.9 7.5 8 .4-6.3 5 2.2 7.8-6.8-4.5-6.8 4.5 2.2-7.8-6.3-5 8-.4z" stroke="#6b6b6b" stroke-width="1.9" stroke-linejoin="miter"/>
<!-- cloud upload -->
<path d="M109.8 117.3h-1.3a4.5 4.5 0 0 1-.700-8.9 6.3 6.3 0 0 1 12.3-1.3 5.2 5.2 0 0 1 .4 10.2h-1.8" stroke="#6b6b6b" stroke-width="1.9"/>
<path d="M114.2 121.5v-12M110.3 112.8l3.9-4 3.9 4" stroke="#6b6b6b" stroke-width="1.9"/>
<!-- printer -->
<rect x="146" y="106" width="22" height="9.8" rx="1.6" fill="#6b6b6b"/>
<rect x="150" y="101.2" width="14.2" height="6" fill="#f9f9f9" stroke="#6b6b6b" stroke-width="2"/>
<rect x="150" y="112.6" width="14.2" height="7.4" fill="#f9f9f9" stroke="#6b6b6b" stroke-width="2"/>
<path d="M154 115.2h6.2M154 117.4h6.2" stroke="#6b6b6b" stroke-width="0.9"/>
<rect x="163.2" y="108.4" width="2.4" height="1.1" fill="#e8e8e8"/>
<!-- search -->
<circle cx="200.2" cy="109.3" r="7.9" stroke="#6b6b6b" stroke-width="2.1"/>
<path d="M206.5 115.5l6.6 6.5" stroke="#6b6b6b" stroke-width="2.5"/>
<g fill="#6b6b6b"><circle cx="196.8" cy="109.3" r="1"/><circle cx="200.2" cy="109.3" r="1"/><circle cx="203.6" cy="109.3" r="1"/></g>
<!-- up / down -->
<circle cx="324" cy="111" r="9.5" stroke="#bababa" stroke-width="1.8"/>
<path d="M324 116v-9.5M320 110l4-4 4 4" stroke="#bababa" stroke-width="1.8"/>
<circle cx="368" cy="111" r="9.5" stroke="#bababa" stroke-width="1.8"/>
<path d="M368 106v9.5M364 112l4 4 4-4" stroke="#bababa" stroke-width="1.8"/>
<path d="M400 124.5h28" stroke="#c4c4c4" stroke-width="1" stroke-linecap="butt"/>
<path d="M471.5 97v28M859.5 97v28" stroke="#d0d0d0" stroke-width="1" stroke-linecap="butt"/>
<!-- pointer -->
<path d="M499.2 100.7v17l3.9-3.6 2.6 6 2.4-1-2.6-5.9 5.5-.7z" fill="#1f77d0"/>
<!-- hand -->
<path d="M543.8 113.5v-9.3a1.6 1.6 0 0 1 3.2 0v-2.4a1.6 1.6 0 0 1 3.3 0v2a1.6 1.6 0 0 1 3.2 0v2.2a1.5 1.5 0 0 1 3.1 0v8.5c0 4.5-2.8 7.7-7.3 7.7-3.3 0-5.2-1.4-6.8-4l-4.2-6.6c-.9-1.5 1-2.8 2.2-1.6l3.3 3.5" stroke="#6b6b6b" stroke-width="1.7"/>
<path d="M547 104.2v6.8M550.3 103.8v7.2M553.5 106v5" stroke="#6b6b6b" stroke-width="1.7"/>
<!-- zoom out / in -->
<circle cx="592" cy="110.8" r="9.5" stroke="#6b6b6b" stroke-width="1.9"/>
<path d="M587.5 110.8h9" stroke="#6b6b6b" stroke-width="1.9"/>
<circle cx="636" cy="110.8" r="9.5" stroke="#6b6b6b" stroke-width="1.9"/>
<path d="M631.5 110.8h9M636 106.3v9" stroke="#6b6b6b" stroke-width="1.9"/>
<!-- zoom field -->
<path d="M668 124.5h71" stroke="#c4c4c4" stroke-width="1" stroke-linecap="butt"/>
<path d="M724.5 109.2h7l-3.5 4z" fill="#6b6b6b"/>
<!-- fit page -->
<path d="M763.2 101.2h11l5 5v13.6h-16z" stroke="#1a6fd0" stroke-width="2" stroke-linejoin="round"/>
<path d="M774 101.5v5h5" stroke="#1a6fd0" stroke-width="1.4"/>
<path d="M770.7 105.5v11.4M765.2 111.2h11" stroke="#1a6fd0" stroke-width="1.2"/>
<path d="M769 107.2l1.7-1.9 1.7 1.9zM769 115.2l1.7 1.9 1.7-1.9zM767 109.5l-1.9 1.7 1.9 1.7zM774.4 109.5l1.9 1.7-1.9 1.7z" fill="#1a6fd0" stroke="#1a6fd0" stroke-width="0.6"/>
<path d="M785 109.2h7l-3.5 4.2z" fill="#1a6fd0"/>
<!-- scroll mode -->
<rect x="817" y="102.3" width="20" height="7" rx="1" stroke="#6b6b6b" stroke-width="1.9"/>
<path d="M820.3 105.8h1.6M824.3 105.8h1.6M828.3 105.8h1.6M832.3 105.8h1.6" stroke="#6b6b6b" stroke-width="1.7" stroke-linecap="butt"/>
<path d="M827 111.8v8.8M822.6 116.6l4.4 4.3 4.4-4.3" stroke="#6b6b6b" stroke-width="1.9"/>
<!-- comment -->
<path d="M884 102.3h16a1 1 0 0 1 1 1v12a1 1 0 0 1-1 1h-8l-3.8 4.5v-4.5h-4.2a1 1 0 0 1-1-1v-12a1 1 0 0 1 1-1z" fill="#e2e2e2" stroke="#6b6b6b" stroke-width="1.9"/>
<path d="M886.5 107.5h11M886.5 110.5h9" stroke="#6b6b6b" stroke-width="1"/>
<!-- highlighter -->
<rect x="931" y="117" width="16" height="4.6" fill="#dcdcdc"/>
<path d="M941.5 101.8a2.6 2.6 0 0 1 4.2 3l-10.5 13-4.2-3.2z" fill="#dedede" stroke="#6b6b6b" stroke-width="1.7"/>
<path d="M931.6 114.2l4.2 3.5-2.7 2.6h-8.2z" fill="#6b6b6b" stroke="#6b6b6b" stroke-width="0.8"/>
<!-- sign pen -->
<path d="M981.5 101l6.8 6.2-3.7 4.2-6.8-6.2z" fill="#dedede" stroke="#dedede" stroke-width="0.8"/>
<path d="M981.3 100.8l-3.4 4.3-6.2 3.4-2.8 11.6 11.7-3.2 3.4-6 4.2-3.5" stroke="#6b6b6b" stroke-width="1.8"/>
<path d="M969.5 119.7l6.3-6.4" stroke="#6b6b6b" stroke-width="1.3"/>
<circle cx="976.3" cy="112.7" r="1.1" fill="#6b6b6b"/>
<path d="M982.2 120.3l1.7-3.4 1 3.4 1.5-3 .8 2.8 1.2-2.4.9 2.6h1.4" stroke="#6b6b6b" stroke-width="1.2"/>
<!-- stamp/edit -->
<path d="M1016 108.5v-7.3h10.2l4.8 4.8v3M1016 113.5v7.2h7" stroke="#6b6b6b" stroke-width="1.8"/>
<path d="M1026 101.5v4.8h4.8" stroke="#6b6b6b" stroke-width="1.3"/>
<rect x="1012.2" y="104.8" width="8.2" height="5" rx="1" fill="#6b6b6b"/>
<path d="M1033.3 109.8a1.5 1.5 0 0 1 2.3 2l-10 10.2-3 .8.8-3z" fill="#e4e4e4" stroke="#6b6b6b" stroke-width="1.5"/>
<!-- link -->
<g stroke="#6b6b6b" stroke-width="2" fill="none">
<rect x="-6.8" y="-3.7" width="13.6" height="7.4" rx="3.7" transform="translate(1265 106.3) rotate(-45)"/>
<rect x="-6.8" y="-3.7" width="13.6" height="7.4" rx="3.7" transform="translate(1257.6 113.7) rotate(-45)"/>
</g>
<path d="M1263.2 123a3.2 3.2 0 0 1 .2-6.3 4.4 4.4 0 0 1 8.2-.8 3.6 3.6 0 0 1 .8 7.100z" fill="#6b6b6b" stroke="#f9f9f9" stroke-width="1.2"/>
<!-- mail -->
<rect x="1297" y="103" width="20" height="15" stroke="#6b6b6b" stroke-width="1.9" stroke-linejoin="miter"/>
<path d="M1297.5 103.5l9.5 8 9.5-8M1297.5 117.5l7-7.5M1316.5 117.5l-7-7.5" stroke="#6b6b6b" stroke-width="1.3"/>
<!-- person add -->
<path d="M1348.3 100.3c2.5 0 4.2 1.9 4.2 4.6 0 1.9-.8 3.7-1.9 4.7v1.5l4.3 1.8c.6.3 1 .7 1.2 1.2a7 7 0 0 0-1.8 3.4h-15.1v-2.3c0-1.1.6-1.9 1.6-2.3l5-2v-1.3c-1.1-1-1.8-2.8-1.8-4.7 0-2.7 1.8-4.6 4.3-4.6z" fill="#6b6b6b"/>
<circle cx="1357.2" cy="116.8" r="5.6" fill="#6b6b6b" stroke="#f9f9f9" stroke-width="1"/>
<path d="M1354.2 116.8h6M1357.2 113.8v6" stroke="#f9f9f9" stroke-width="1.5" stroke-linecap="butt"/>
</svg>
<div class="abs" style="left:411px;top:104px;font-size:12px;color:#555;white-space:nowrap">1</div>
<div class="abs" style="left:434px;top:104px;font-size:12px;color:#555;white-space:nowrap">/&nbsp;&nbsp;1</div>
<div class="abs" style="left:676px;top:104px;font-size:11.5px;color:#555;white-space:nowrap;letter-spacing:-0.3px">70.2%</div>

<!-- ICONS-END -->
<!-- ICONSR-START -->
<svg class="abs" style="left:0;top:135px" width="1379" height="903" viewBox="0 135 1379 903" fill="none" stroke-linecap="round" stroke-linejoin="round">
<!-- left pane arrow -->
<path d="M7 580.9v11.3l6.1-5.65z" fill="#727272"/>
<!-- mid pane arrow -->
<path d="M1325.1 580.9v11.3l-6.2-5.65z" fill="#6d6d6d"/>
<!-- scrollbar bits -->
<rect x="1297" y="136" width="15" height="6" fill="#e2e2e2"/>
<path d="M1296 142.5h17M1312.5 136v6" stroke="#9f9f9f" stroke-width="1" stroke-linecap="butt"/>
<path d="M1301 154.5l3.5-4 3.5 4" stroke="#a6a6a6" stroke-width="1.4"/>
<path d="M1301 1027.5l3.5 4 3.5-4" stroke="#b4b4b4" stroke-width="1.4"/>
<!-- separators -->
<path d="M1341 181.5h28M1341 992.5h28" stroke="#c8c8c8" stroke-width="1" stroke-linecap="butt"/>
<!-- search -->
<circle cx="1353.7" cy="156.5" r="7.4" stroke="#6b6b6b" stroke-width="2.1"/>
<path d="M1359.3 162.3l5.4 5" stroke="#6b6b6b" stroke-width="2.5"/>
<path d="M1352.3 153.3v6.4l-3.4-3.2zM1355.1 153.3v6.4l3.4-3.2z" fill="#6b6b6b"/>
<!-- create pdf -->
<path d="M1346 195h10.5l5 5v8M1354 216h-8z" stroke="#e5424d" stroke-width="0"/>
<path d="M1346 195h10.5l5 5v6.5a6 6 0 0 0-6 9.5h-9.5z" fill="#f7dfe3" stroke="#e5424d" stroke-width="1.9"/>
<path d="M1349.5 210c2-1.2 3.3-3.6 3.9-6 .3-1.3-.9-1.5-.9-.2.1 2 2 4.3 4.2 4.7" stroke="#e5424d" stroke-width="1"/>
<circle cx="1361" cy="211.3" r="5.8" fill="#e5424d"/>
<path d="M1357.8 211.3h6.4M1361 208.1v6.4" stroke="#fff" stroke-width="1.9" stroke-linecap="butt"/>
<!-- layout pink -->
<rect x="1345" y="241" width="20" height="8" rx="1" fill="#f6dcec" stroke="#dc2b97" stroke-width="1.8"/>
<rect x="1345" y="253" width="8.5" height="8" rx="1" fill="#f6dcec" stroke="#dc2b97" stroke-width="1.8"/>
<path d="M1358 253.5h8M1358 257h8M1358 260.5h8" stroke="#dc2b97" stroke-width="1" stroke-linecap="butt"/>
<!-- export pdf -->
<path d="M1346 287h10.5l5 5v6.5a6 6 0 0 0-6 9.5h-9.5z" fill="#d4e8ec" stroke="#188c96" stroke-width="1.9"/>
<path d="M1349.5 302c2-1.2 3.3-3.6 3.9-6 .3-1.3-.9-1.5-.9-.2.1 2 2 4.3 4.2 4.7" stroke="#188c96" stroke-width="1"/>
<circle cx="1361" cy="303.3" r="5.8" fill="#188c96"/>
<path d="M1357.8 303.3h5.6M1361.3 300.8l2.5 2.5-2.5 2.5" stroke="#fff" stroke-width="1.6"/>
<!-- comment yellow -->
<path d="M1346.5 333h17a1.5 1.5 0 0 1 1.5 1.5v12a1.5 1.5 0 0 1-1.5 1.5h-6.5l-5.5 5.5v-5.5h-5a1.5 1.5 0 0 1-1.5-1.5v-12a1.5 1.5 0 0 1 1.5-1.5z" fill="#dcb02e"/>
<path d="M1349.5 338.5h11M1349.5 342.5h9" stroke="#fff" stroke-width="1.5" stroke-linecap="butt"/>
<!-- organize green -->
<rect x="1357" y="380" width="8.5" height="18.5" rx="1" fill="#e4f3d8" stroke="#7ac143" stroke-width="1.8"/>
<path d="M1346 389v9.5h8v-9.5z" stroke="#7ac143" stroke-width="1.8" stroke-dasharray="2.2 1.8" stroke-linecap="butt"/>
<path d="M1346 380h6l-2 2 3.5 3.5-2 2-3.5-3.5-2 2z" fill="#7ac143"/>
<!-- scan green -->
<path d="M1350 434v-9.5h7.5l4.5 4.5v5" fill="#d8efdb" stroke="#39b24a" stroke-width="1.9"/>
<path d="M1357 424.5v5h5" stroke="#39b24a" stroke-width="1.4"/>
<path d="M1344 433h22v6h-4v-4h-14v4h-4z" fill="#39b24a" stroke="#39b24a" stroke-width="1"/>
<path d="M1349 439.5v6.5h12v-6.5" stroke="#39b24a" stroke-width="1.6" stroke-dasharray="1.6 1.4" stroke-linecap="butt"/>
<path d="M1345.5 426v2.4M1344.3 427.2h2.4M1364.5 424.5v3.5M1362.8 426.2h3.5M1360.8 422v2M1359.8 423h2" stroke="#39b24a" stroke-width="0.9"/>
<!-- shield -->
<path d="M1355 470.5c3.4 2.5 5.6 3 8.5 3.2v7.3c0 5.5-3.8 9-8.5 11.2-4.7-2.2-8.5-5.7-8.5-11.2v-7.3c2.9-.2 5.1-.7 8.5-3.2z" fill="#fff" stroke="#5a5ce0" stroke-width="1.9"/>
<path d="M1355 472v19c-4-2-7.3-5-7.3-10v-6.6c2.7-.2 4.6-.8 7.3-2.4z" fill="#dcdcf6"/>
<!-- fill & sign pen -->
<path d="M1359.5 517.5a2.9 2.9 0 0 1 4.6 3.5l-11.5 13.5-7 2 1.2-7z" fill="#e4dcf4" stroke="#8b4fd8" stroke-width="1.9"/>
<path d="M1347 530l5.5 4.3" stroke="#8b4fd8" stroke-width="1.3"/>
<path d="M1355.5 536.5c1.5-3 3-4 3.3-2.3.2 1.6.8 2.6 2 1 1.2-1.7 2-1.5 2.2-.3.2 1.3 1 1.8 3.2-.6" stroke="#8b4fd8" stroke-width="1.7"/>
<!-- redact/form magenta -->
<path d="M1348 564h9.5l5.5 5.5v14h-15z" fill="#eedcf2" stroke="#c43bd0" stroke-width="1.9"/>
<path d="M1357 564.5v5.5h5.5" stroke="#c43bd0" stroke-width="1.4"/>
<rect x="1351" y="575.5" width="9" height="3.6" rx="0.8" fill="#fff" stroke="#c43bd0" stroke-width="1.7"/>
<!-- combine -->
<path d="M1356 607.5h7l4 4v14h-11z" fill="#6a6ce8"/>
<path d="M1363 607.5v4h4" fill="#fff" stroke="#fff" stroke-width="0.6"/>
<path d="M1344.5 608.5h8l3 3v12.5h-11z" fill="#fff" stroke="#6a6ce8" stroke-width="1.9"/>
<path d="M1347.2 620c1.5-1 2.5-2.8 3-4.6.2-1-.7-1.1-.7-.1.1 1.5 1.5 3.2 3.2 3.5" stroke="#e04a4a" stroke-width="0.9"/>
<path d="M1353.5 618h4v7h3.2l-5.2 5.8-5.2-5.8h3.2z" fill="#6a6ce8" stroke="#fafafa" stroke-width="0.7"/>
<!-- wrench -->
<path d="M1361.8 655.8a4.9 4.9 0 0 0-6.5 6l-9.7 9.5a1.9 1.9 0 0 0 2.7 2.7l9.6-9.7a4.9 4.9 0 0 0 6.1-6.2l-3 3-2.5-.6-.6-2.5z" fill="#6b6b6b" stroke="#6b6b6b" stroke-width="0.8"/>
<circle cx="1361.3" cy="671.3" r="5.8" fill="#6b6b6b" stroke="#fafafa" stroke-width="1"/>
<path d="M1358.2 671.3h6.2M1361.3 668.2v6.2" stroke="#fafafa" stroke-width="1.6" stroke-linecap="butt"/>
<!-- collapse -->
<path d="M1352.5 1009v14.5" stroke="#6b6b6b" stroke-width="2.2" stroke-linecap="butt"/>
<path d="M1356 1016.3h8M1360.5 1012.8l3.7 3.5-3.7 3.5" stroke="#6b6b6b" stroke-width="1.5"/>
</svg>

<!-- ICONSR-END -->
<!-- window border -->
<div class="abs bord" style="left:0;top:0;width:1px;height:1040px"></div>
<div class="abs bord" style="left:1378px;top:0;width:1px;height:1040px"></div>
<div class="abs bord" style="left:0;top:0;width:1379px;height:1px"></div>
<div class="abs bord" style="left:0;top:1038px;width:1379px;height:2px"></div>
</div>
</body>
</html>
